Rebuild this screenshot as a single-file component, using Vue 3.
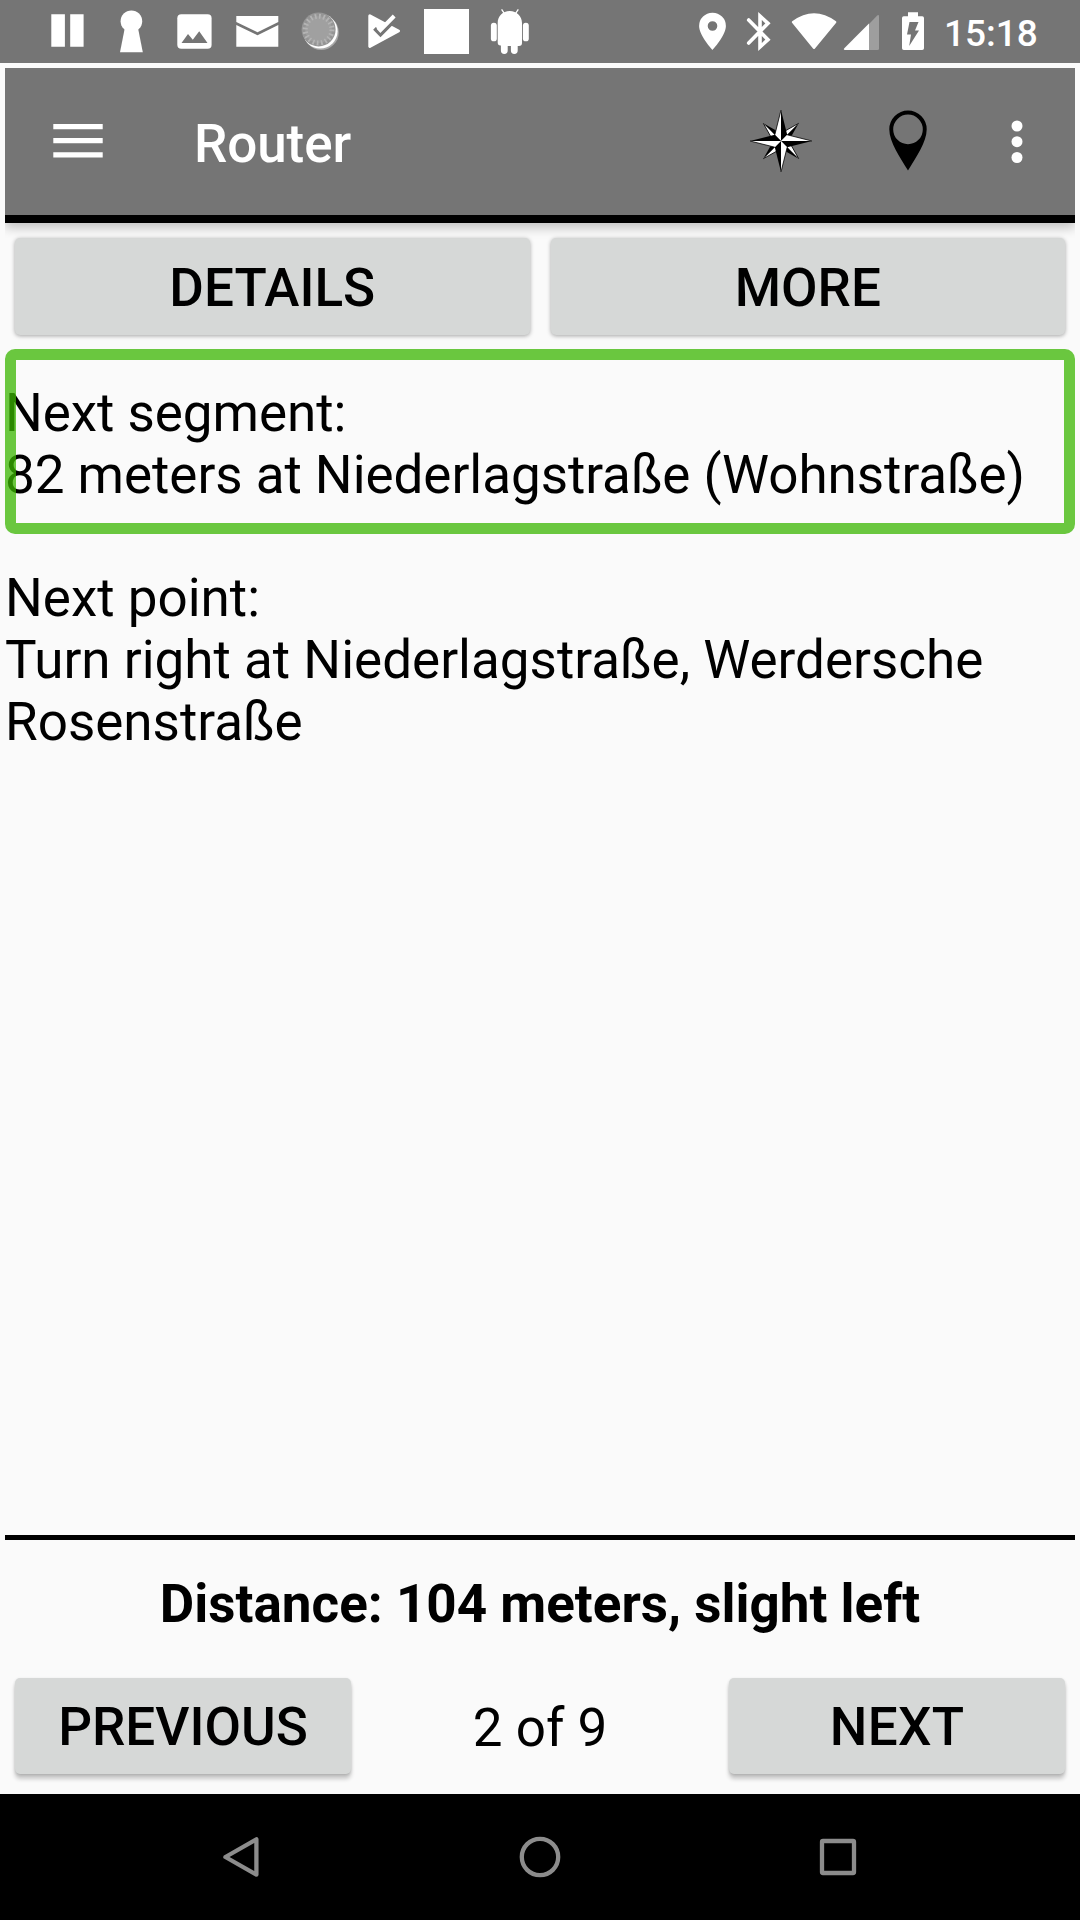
<script setup>
const rays = [0, 90, 180, 270]
const paragraphs = [
  { lines: ['Next segment:', '82 meters at Niederlagstraße (Wohnstraße)'], focused: true },
  { lines: ['Next point:', 'Turn right at Niederlagstraße, Werdersche', 'Rosenstraße'], focused: false }
]
</script>

<template>
  <div class="screen">
    <header class="status">
      <svg viewBox="36 0 63 63" width="63" height="63"><path fill="#fff" d="M51.3 14.3h13.6v32.4H51.3zM70.2 14.3h13.4v32.4H70.2z" /></svg>
      <svg viewBox="99 0 63 63" width="63" height="63"><circle cx="131.4" cy="21.2" r="10.8" fill="#fff" /><path fill="#fff" d="M125 27h12.8l5 25.2H120z" /></svg>
      <svg viewBox="162 0 63 63" width="63" height="63"><rect x="177.3" y="14.3" width="34.3" height="34.4" rx="4" fill="#fff" /><path fill="#757575" d="M181.5 43l6.5-9 4.8 5.7 6.4-8.4 8.3 11.7z" /></svg>
      <svg viewBox="225 0 63 63" width="63" height="63"><path fill="#fff" d="M236.3 16h42v6l-20.8 10.2L236.3 22zM236.3 25l21.2 10.3L278.3 25v21.7h-42z" /></svg>
      <svg viewBox="288 0 63 63" width="63" height="63">
        <circle cx="321.2" cy="32.4" r="17.6" fill="#a8a8a8" /><circle cx="320.2" cy="31.2" r="17.4" fill="#fff" /><circle cx="318.6" cy="29.4" r="17" fill="#959595" />
        <circle cx="318.6" cy="29.6" r="13.4" fill="#a0a0a0" stroke="#b4b4b4" stroke-width="5" stroke-dasharray="1.7 2.51" />
      </svg>
      <svg viewBox="351 0 63 63" width="63" height="63">
        <path fill="#fff" stroke="#fff" stroke-width="3" stroke-linejoin="round" d="M369.8 15.8L398.5 31 369.8 46.4z" />
        <path fill="none" stroke="#757575" stroke-width="3.8" d="M374.5 28.4l6 6.2L397 18" />
        <path fill="none" stroke="#757575" stroke-width="3" d="M386 19.4l5-5" />
        <path fill="none" stroke="#fff" stroke-width="4" d="M378 27.400l2.400 2.600L394.200 16" />
      </svg>
      <svg viewBox="414 0 63 63" width="63" height="63"><path fill="#fff" d="M424 9h45v45h-45z" /></svg>
      <svg viewBox="477 0 63 63" width="63" height="63">
        <path fill="#fff" d="M497.7 23c0-7 5-12 12-12s12.3 5 12.3 12v20a3 3 0 0 1-3 3h-1.3v4.5a3.4 3.4 0 0 1-6.8 0V46h-3.2v4.5a3.4 3.4 0 0 1-6.8 0V45.4a3 3 0 0 1-3.2-3z" />
        <rect x="490.9" y="22.7" width="5.9" height="18.6" rx="2.9" fill="#fff" /><rect x="522.9" y="22.7" width="5.9" height="18.6" rx="2.9" fill="#fff" />
        <path stroke="#fff" stroke-width="1.3" d="M501.6 9.3l3 4.500M518.3 9.3l-3 4.500" />
      </svg>
      <span class="spacer"></span>
      <svg viewBox="690 0 45 63" width="45" height="63"><path fill="#fff" fill-rule="evenodd" d="M712.5 12.7a13.3 13.3 0 0 0-13.4 13.3c0 9.5 13.4 24 13.4 24s13.4-14.5 13.4-24a13.3 13.3 0 0 0-13.4-13.3zm0 18.1a4.8 4.8 0 1 1 0-9.6 4.8 4.8 0 0 1 0 9.6z" /></svg>
      <svg viewBox="735 0 45 63" width="45" height="63"><path fill="none" stroke="#fff" stroke-width="3.6" stroke-linecap="round" d="M748.7 20L768 39.7l-8 7.3V16l8 7.3L748.7 43" /></svg>
      <svg viewBox="780 0 60 63" width="60" height="63"><path fill="#fff" stroke="#fff" stroke-width="2" stroke-linejoin="round" d="M792.8 22Q814 6.4 835.4 22L814 48z" /></svg>
      <svg viewBox="840 0 50 63" width="50" height="63"><path fill="#9e9e9e" d="M869 24l8-8.300q2-1.500 2 .8V48.500q0 1.500-1.500 1.500H869z" /><path fill="#fff" d="M869 23.500V50h-24q-2 0-.7-1.700z" /></svg>
      <svg viewBox="890 0 45 63" width="45" height="63"><path fill="#fff" d="M908 12.2h10v4h4.200q1.800 0 1.800 1.800v30.200q0 1.800-1.800 1.800h-18.400q-1.800 0-1.800-1.800V18q0-1.800 1.800-1.800h4.200z" /><path fill="#757575" d="M909.5 22h9l-3.500 8.500h4L909.2 46l1.800-11.500h-4z" /></svg>
      <time>15:18</time>
    </header>

    <nav class="appbar">
      <svg class="menu" viewBox="0 0 50 34" width="50" height="34"><path fill="#fff" d="M.3 0h49.400v5.200H.3zM.3 14.100h49.400v5.200H.3zM.3 28.300h49.400v5.200H.3z" /></svg>
      <h1>Router</h1>
      <svg class="compass" viewBox="-32 -32 64 64" width="64" height="64">
        <g v-for="a in rays" :key="'d' + a" :transform="`rotate(${a + 45})`"><path fill="#fff" d="M0-25L-4.500-9 0 0z" /><path d="M0-25L4.500-9 0 0z" /><path fill="none" stroke="#000" stroke-width=".8" d="M0-25L-4.500-9" /></g>
        <g v-for="a in rays" :key="'m' + a" :transform="`rotate(${a})`"><path fill="#fff" d="M0-31L-6.200-6.200 0 0z" /><path d="M0-31L6.200-6.200 0 0z" /><path fill="none" stroke="#000" stroke-width=".8" d="M0-31L-6.200-6.200" /></g>
      </svg>
      <svg class="pin" viewBox="0 0 40 62" width="40" height="62"><path fill-rule="evenodd" d="M20 .5A18.700 18.700 0 0 0 1.300 19.200C1.300 32 12 47 20 60.500 28 47 38.700 32 38.700 19.200A18.700 18.700 0 0 0 20 .5zm0 33.700a14.800 14.800 0 1 1 0-29.600 14.800 14.800 0 0 1 0 29.600z" /></svg>
      <svg class="dots" viewBox="0 0 12 44" width="12" height="44" fill="#fff"><circle cx="6" cy="6" r="5.500" /><circle cx="6" cy="21.700" r="5.500" /><circle cx="6" cy="37.500" r="5.500" /></svg>
    </nav>

    <div class="row top">
      <button>DETAILS</button>
      <button>MORE</button>
    </div>

    <main>
      <p v-for="(p, i) in paragraphs" :key="i" :class="{ focused: p.focused }">
        <span v-for="l in p.lines" :key="l">{{ l }}</span>
      </p>
    </main>

    <section class="distance">Distance: 104 meters, slight left</section>
    <div class="row bottom">
      <button>PREVIOUS</button>
      <span class="count">2 of 9</span>
      <button class="next">NEXT</button>
    </div>

    <footer>
      <svg viewBox="0 0 44 44" width="44" height="44"><path d="M36.400 4.300v35.400L5.400 22z" /></svg>
      <svg viewBox="0 0 44 44" width="44" height="44"><circle cx="22" cy="22" r="18.200" /></svg>
      <svg viewBox="0 0 44 44" width="44" height="44"><rect x="6" y="6" width="32" height="32" rx="1" /></svg>
    </footer>
  </div>
</template>

<style>
body { margin: 0; background: #fafafa; }
</style>

<style scoped>
.screen { width: 1080px; height: 1920px; display: flex; flex-direction: column; background: #fafafa; font-family: Roboto, "Liberation Sans", sans-serif; font-size: 53px; line-height: 62px; color: #000; overflow: hidden; }
svg { display: block; flex: none; }
.status { height: 63px; flex: none; box-sizing: border-box; padding: 0 42px 0 36px; display: flex; background: #757575; color: #fff; }
.spacer { width: 150px; flex: none; }
time { font-size: 37px; font-weight: 500; line-height: 67px; margin-left: 9px; white-space: nowrap; }
.appbar { height: 147px; flex: none; margin: 5px 5px 0; background: #757575; border-bottom: 8px solid #000; display: flex; align-items: flex-start; box-shadow: 0 5px 10px rgba(0, 0, 0, .22); clip-path: inset(0 0 -24px 0); }
.menu { margin: 56px 0 0 48px; }
h1 { margin: 45px 0 0 91px; width: 160px; font-size: 53px; line-height: 62px; font-weight: 500; color: #fff; letter-spacing: -.1px; }
.compass { margin: 40.5px 0 0 395px; }
.pin { margin: 42px 0 0 75px; }
.dots { margin: 52px 0 0 83px; }
.row { display: flex; padding: 0 15px; flex: none; }
.top { margin-top: 15px; gap: 21px; }
button { border: 0; padding: 2px 0 0; border-radius: 5px; background: #d6d8d7; font: inherit; font-weight: 500; color: #000; }
.top button { flex: 1; height: 97px; box-shadow: 0 1px 4px rgba(0, 0, 0, .35); }
main { flex: 1; margin: 14px 5px 0; }
p { margin: 0; padding: 33px 0 28px; position: relative; }
p span { display: block; white-space: nowrap; }
.focused { letter-spacing: -.05px; }
.focused::after { content: ""; position: absolute; inset: 0; border: 11px solid rgba(57, 181, 0, .75); border-radius: 10px; }
.distance { flex: none; height: 138px; box-sizing: border-box; margin: 0 5px; border-top: 5px solid #000; padding-top: 33px; text-align: center; font-weight: 700; }
.bottom { height: 116px; margin-top: 5px; align-items: flex-start; }
.bottom button { width: 336px; height: 96px; box-shadow: 0 5px 4px rgba(0, 0, 0, .2), 0 1px 3px rgba(0, 0, 0, .15); }
.bottom .next { letter-spacing: .3px; }
.count { flex: 1; text-align: center; line-height: 100px; }
footer { height: 126px; flex: none; background: #000; display: flex; align-items: center; justify-content: center; gap: 254px; }
footer svg { fill: none; stroke: #8c8c8c; stroke-width: 4.3; stroke-linejoin: round; }
</style>
